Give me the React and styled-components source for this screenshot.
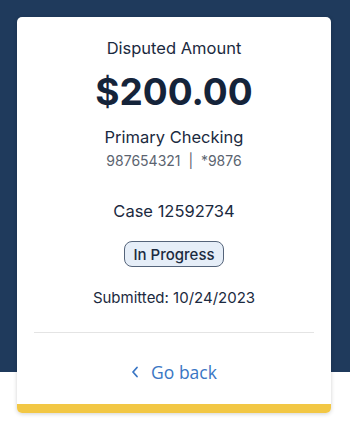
import React from 'react';
import styled, { createGlobalStyle } from 'styled-components';

const GlobalStyle = createGlobalStyle`
  html, body {
    margin: 0;
    padding: 0;
    background: #ffffff;
  }
  * {
    box-sizing: border-box;
  }
`;

const Page = styled.div`
  width: 350px;
  height: 435px;
  padding: 17px 19px 0 17px;
  background: linear-gradient(#1f3a5c 0, #1f3a5c 372px, #ffffff 372px);
  font-family: 'Inter', 'Lato', sans-serif;
  color: #1b2a40;
`;

const Card = styled.section`
  background: #ffffff;
  border-radius: 5px;
  overflow: hidden;
  box-shadow: 0 1px 4px rgba(0, 0, 0, 0.18);
  display: flex;
  flex-direction: column;
`;

const Body = styled.div`
  display: flex;
  flex-direction: column;
  align-items: center;
  padding: 20px 17px 21px;
  text-align: center;
`;

const Label = styled.div`
  font-size: 16.5px;
  line-height: 22px;
  margin-top: ${(p) => p.$top || 0}px;
`;

const Amount = styled.div`
  font-size: 37px;
  line-height: 44px;
  font-weight: 700;
  color: #15243a;
  margin-top: 11px;
`;

const AccountLine = styled.div`
  font-size: 14px;
  line-height: 20px;
  color: #5b6470;
  margin-top: 3px;
`;

const Badge = styled.span`
  margin-top: 19px;
  height: 26px;
  padding: 0 8px;
  display: inline-flex;
  align-items: center;
  border: 1.5px solid #55647a;
  border-radius: 8px;
  background: #e6eef8;
  font-size: 15px;
  font-weight: 500;
  color: #1b2a40;
`;

const Submitted = styled.div`
  font-size: 15px;
  line-height: 20px;
  margin-top: 21px;
`;

const Divider = styled.hr`
  align-self: stretch;
  border: 0;
  border-top: 1px solid #e4e4e4;
  margin: 24px 0 0;
`;

const BackLink = styled.a`
  margin-top: 28px;
  display: inline-flex;
  align-items: center;
  gap: 12px;
  font-family: 'Open Sans', 'Lato', sans-serif;
  font-size: 17.5px;
  line-height: 22px;
  color: #3a76c4;
  text-decoration: none;
  cursor: pointer;
`;

const Accent = styled.div`
  height: 9px;
  background: #f2c744;
`;

const Chevron = () => (
  <svg width="8" height="12" viewBox="0 0 8 12" fill="none">
    <path d="M6 1.5L2 6l4 4.5" stroke="#3a76c4" strokeWidth="1.8" strokeLinecap="round" strokeLinejoin="round" />
  </svg>
);

export default function App() {
  return (
    <>
      <GlobalStyle />
      <Page>
        <Card>
          <Body>
            <Label>Disputed Amount</Label>
            <Amount>$200.00</Amount>
            <Label $top={12}>Primary Checking</Label>
            <AccountLine>987654321&nbsp;&nbsp;|&nbsp;&nbsp;*9876</AccountLine>
            <Label $top={29}>Case 12592734</Label>
            <Badge>In Progress</Badge>
            <Submitted>Submitted: 10/24/2023</Submitted>
            <Divider />
            <BackLink>
              <Chevron />
              Go back
            </BackLink>
          </Body>
          <Accent />
        </Card>
      </Page>
    </>
  );
}
